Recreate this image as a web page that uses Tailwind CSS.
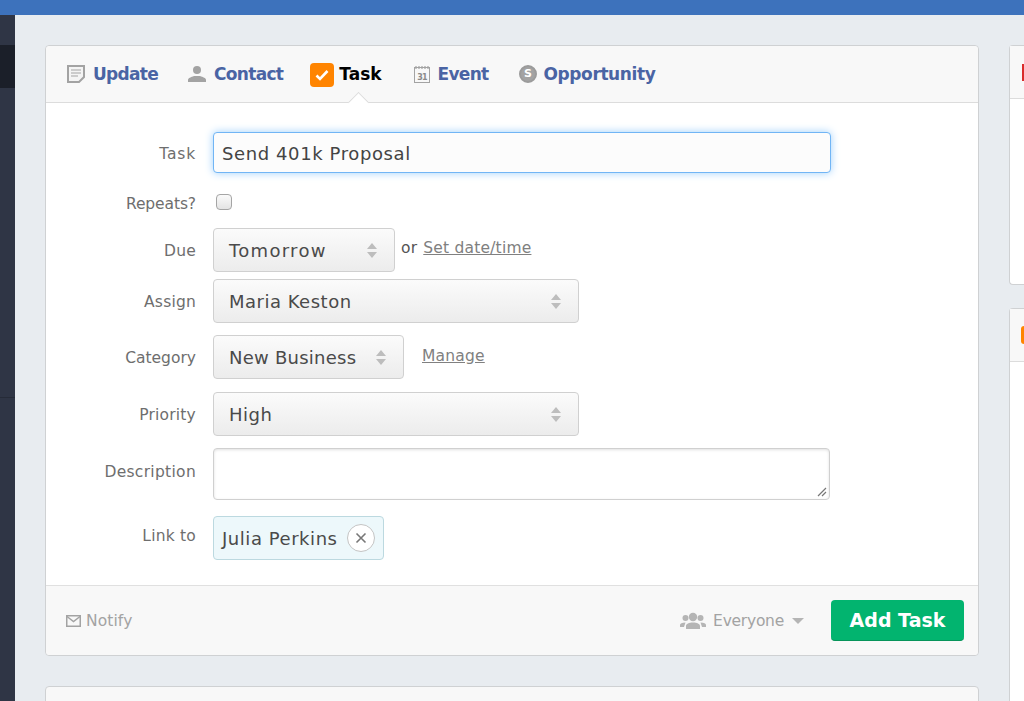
<!DOCTYPE html>
<html lang="en">
<head>
  <meta charset="UTF-8">
  <title>Add Task</title>
  <script src="https://cdn.jsdelivr.net/npm/@tailwindcss/browser@4"></script>
</head>
<body class="h-[701px] overflow-hidden bg-[#e8ecf0] font-['DejaVu_Sans',sans-serif]">

  <!-- Top bar -->
  <div class="h-[15px] bg-[#3d72bc]"></div>

  <div class="flex h-[686px]">
    <!-- Sidebar -->
    <div class="w-[15px] shrink-0 bg-[#2f3545]">
      <div class="mt-[30px] h-[43px] bg-[#1b1f29]"></div>
      <div class="mt-[309px] h-px bg-[#262b38]"></div>
    </div>

    <!-- Main column -->
    <div class="w-[964px] shrink-0 pl-[30px] pt-[30px]">
      <div class="h-[611px] rounded-[4px] border border-[#cfd1d3] bg-white">

        <!-- Tabs -->
        <div class="relative flex h-[57px] items-center rounded-t-[4px] border-b border-[#dcdcdc] bg-[#f8f8f8] pl-[21px] text-[17px] font-bold tracking-[-0.7px] text-[#4a64a4]">
          <div class="flex items-center gap-[8px]">
            <svg class="h-[18px] w-[18px]" viewBox="0 0 18 18"><path d="M1 1h16v11l-5 5H1z" fill="#f4f4f4" stroke="#a3a3a3" stroke-width="2"/><path d="M4 5h10M4 8h10M4 11h7" stroke="#a3a3a3" stroke-width="1.2"/></svg>
            <span class="pt-[2px]">Update</span>
          </div>
          <div class="ml-[30px] flex items-center gap-[8px]">
            <svg class="h-[18px] w-[18px]" viewBox="0 0 18 18"><circle cx="9" cy="5" r="4" fill="#a3a3a3"/><path d="M0 17v-2c0-2 3-3 6-4h6c3 1 6 2 6 4v2z" fill="#a3a3a3"/></svg>
            <span class="pt-[2px]">Contact</span>
          </div>
          <div class="ml-[27px] flex items-center gap-[5px] tracking-[0px] text-black">
            <span class="mt-[2px] flex h-[24px] w-[24px] items-center justify-center rounded-[4px] bg-[#ff8400]">
              <svg class="h-[14px] w-[14px]" viewBox="0 0 14 14"><path d="M1.5 7.5l3.500 3.500 7.500-8" fill="none" stroke="#fff" stroke-width="2.600"/></svg>
            </span>
            <span class="pt-[2px]">Task</span>
          </div>
          <div class="ml-[32px] flex items-center gap-[8px]">
            <svg class="h-[18px] w-[16px]" viewBox="0 0 16 18"><rect x="0.5" y="2.5" width="15" height="15" fill="#f8f8f8" stroke="#a3a3a3"/><path d="M2 1v3M5 1v3M8 1v3M11 1v3M14 1v3" stroke="#a3a3a3" stroke-width="1.2"/><text x="8" y="14.5" text-anchor="middle" font-size="8" fill="#8a8a8a">31</text></svg>
            <span class="pt-[2px]">Event</span>
          </div>
          <div class="ml-[30px] flex items-center gap-[7px]">
            <span class="flex h-[18px] w-[18px] items-center justify-center rounded-full border-2 border-[#9b9b9b] bg-[#a3a3a3] text-[11px] font-bold text-white">S</span>
            <span class="pt-[2px] tracking-[-0.4px]">Opportunity</span>
          </div>
          <!-- Active tab notch -->
          <div class="absolute bottom-[-8px] left-[304.500px] h-[15px] w-[15px] rotate-45 border-l border-t border-[#dcdcdc] bg-white"></div>
        </div>

        <!-- Form -->
        <div class="h-[482px] pt-[29px] text-[15.5px] tracking-[0.2px] text-[#6e6e6e]">
          <div class="flex items-center">
            <label class="w-[150px] pt-[5px] text-right tracking-[0.8px]">Task</label>
            <div class="ml-[17px] flex h-[41px] w-[618px] items-center rounded-[4px] border border-[#71b5f5] bg-[#fcfcfc] pl-[8px] pt-[2px] text-[18px] tracking-[0.6px] text-[#444] shadow-[0_0_8px_#9fd0fb]">Send 401k Proposal</div>
          </div>

          <div class="mt-[20px] flex h-[18px] items-center">
            <label class="w-[150px] pt-[5px] text-right tracking-[-0.1px]">Repeats?</label>
            <div class="ml-[20px] h-[16px] w-[16px] rounded-[4px] border border-[#a5a5a5] bg-gradient-to-b from-[#fafafa] to-[#e4e4e4]"></div>
          </div>

          <div class="mt-[17px] flex items-center">
            <label class="w-[150px] pt-[4px] text-right">Due</label>
            <div class="ml-[17px] flex h-[44px] w-[182px] items-center justify-between rounded-[4px] border border-[#d0d0d0] bg-gradient-to-b from-[#fbfbfb] to-[#ececec] pl-[15px] pr-[16px] text-[18px] tracking-[1.3px] text-[#4a4a4a]">
              <span class="pt-[1px]">Tomorrow</span>
              <svg class="h-[15px] w-[12px]" viewBox="0 0 12 15"><path d="M6 0l5 6H1zM6 15l5-6H1z" fill="#bdbdbd"/></svg>
            </div>
            <span class="ml-[6px] mb-[3px] text-[#555]">or</span>
            <a class="ml-[6px] mb-[3px] text-[#808080] underline">Set date/time</a>
          </div>

          <div class="mt-[7px] flex items-center">
            <label class="w-[150px] pt-[4px] text-right">Assign</label>
            <div class="ml-[17px] flex h-[44px] w-[366px] items-center justify-between rounded-[4px] border border-[#d0d0d0] bg-gradient-to-b from-[#fbfbfb] to-[#ececec] pl-[15px] pr-[16px] text-[18px] tracking-[0.5px] text-[#4a4a4a]">
              <span class="pt-[1px]">Maria Keston</span>
              <svg class="h-[15px] w-[12px]" viewBox="0 0 12 15"><path d="M6 0l5 6H1zM6 15l5-6H1z" fill="#bdbdbd"/></svg>
            </div>
          </div>

          <div class="mt-[12px] flex items-center">
            <label class="w-[150px] pt-[4px] text-right tracking-[0px]">Category</label>
            <div class="ml-[17px] flex h-[44px] w-[191px] items-center justify-between rounded-[4px] border border-[#d0d0d0] bg-gradient-to-b from-[#fbfbfb] to-[#ececec] pl-[15px] pr-[16px] text-[18px] tracking-[0.25px] text-[#4a4a4a]">
              <span class="pt-[1px]">New Business</span>
              <svg class="h-[15px] w-[12px]" viewBox="0 0 12 15"><path d="M6 0l5 6H1zM6 15l5-6H1z" fill="#bdbdbd"/></svg>
            </div>
            <a class="ml-[18px] mt-[-1px] text-[#808080] underline">Manage</a>
          </div>

          <div class="mt-[13px] flex items-center">
            <label class="w-[150px] pt-[4px] text-right">Priority</label>
            <div class="ml-[17px] flex h-[44px] w-[366px] items-center justify-between rounded-[4px] border border-[#d0d0d0] bg-gradient-to-b from-[#fbfbfb] to-[#ececec] pl-[15px] pr-[16px] text-[18px] tracking-[0.5px] text-[#4a4a4a]">
              <span class="pt-[1px]">High</span>
              <svg class="h-[15px] w-[12px]" viewBox="0 0 12 15"><path d="M6 0l5 6H1zM6 15l5-6H1z" fill="#bdbdbd"/></svg>
            </div>
          </div>

          <div class="mt-[12px] flex items-start">
            <label class="w-[150px] pt-[13px] text-right tracking-[0.3px]">Description</label>
            <div class="relative ml-[17px] h-[52px] w-[617px] rounded-[4px] border border-[#d0d0d0] bg-white shadow-[inset_0_1px_3px_#e0e0e0]">
              <svg class="absolute bottom-[2px] right-[2px] h-[10px] w-[10px]" viewBox="0 0 10 10"><path d="M1 9l8-8M5 9l4-4" stroke="#777" stroke-width="1.2"/></svg>
            </div>
          </div>

          <div class="mt-[16px] flex items-start">
            <label class="w-[150px] pt-[9px] text-right">Link to</label>
            <div class="ml-[17px] flex h-[44px] items-center rounded-[4px] border border-[#bcd9e0] bg-[#edf8fb] pl-[8px] pr-[8px] text-[18px] tracking-[0.55px] text-[#4a4a4a]">
              <span class="pt-[1px]">Julia Perkins</span>
              <span class="ml-[9px] flex h-[28px] w-[28px] items-center justify-center rounded-full border border-[#c4c4c4] bg-white">
                <svg class="h-[12px] w-[12px]" viewBox="0 0 12 12"><path d="M1.5 1.5l9 9M10.500 1.500l-9 9" stroke="#777" stroke-width="1.6"/></svg>
              </span>
            </div>
          </div>
        </div>

        <!-- Footer -->
        <div class="flex h-[70px] items-center justify-between rounded-b-[4px] border-t border-[#e0e0e0] bg-[#f8f8f8] pl-[20px] pr-[14px] text-[15.5px] tracking-[0.1px] text-[#a3a3a3]">
          <div class="flex items-center gap-[5px]">
            <svg class="h-[12px] w-[15px]" viewBox="0 0 15 12"><rect x="0.75" y="0.75" width="13.5" height="10.5" fill="none" stroke="#a3a3a3" stroke-width="1.5"/><path d="M1 1.5l6.500 5 6.500-5" fill="none" stroke="#a3a3a3" stroke-width="1.5"/></svg>
            <span class="pt-[2px]">Notify</span>
          </div>
          <div class="flex items-center">
            <svg class="h-[17px] w-[26px]" viewBox="0 0 26 17"><circle cx="13" cy="5" r="4.2" fill="#b5b5b5"/><circle cx="5.5" cy="6" r="3" fill="#b5b5b5"/><circle cx="20.5" cy="6" r="3" fill="#b5b5b5"/><path d="M6 17v-3c0-2 3-3.500 7-3.500s7 1.500 7 3.500v3zM0 15v-2c0-1.500 2-2.500 5.500-2.500L4 15zM26 15v-2c0-1.500-2-2.500-5.500-2.500L22 15z" fill="#b5b5b5"/></svg>
            <span class="ml-[7px] pt-[2px] tracking-[-0.25px]">Everyone</span>
            <span class="ml-[8px] h-0 w-0 border-x-[6px] border-t-[6px] border-x-transparent border-t-[#b5b5b5]"></span>
            <button class="ml-[27px] h-[41px] w-[133px] rounded-[4px] border-b border-[#07945a] bg-[#02b46f] text-[19px] font-bold tracking-[0px] text-white">Add Task</button>
          </div>
        </div>
      </div>

      <!-- Card below -->
      <div class="mt-[30px] h-[40px] rounded-t-[4px] border border-[#cfd1d3] bg-[#f8f8f8]"></div>
    </div>

    <!-- Right column -->
    <div class="flex-1 overflow-hidden pl-[30px] pt-[30px]">
      <div class="h-[240px] w-[60px] rounded-l-[4px] border border-r-0 border-[#cfd1d3] bg-white">
        <div class="flex h-[53px] items-center border-b border-[#dcdcdc] bg-[#f8f8f8] pl-[12px]">
          <div class="h-[17px] w-[10px] bg-[#d92b2b]"></div>
        </div>
      </div>
      <div class="mt-[23px] h-[400px] w-[60px] rounded-l-[4px] border border-r-0 border-[#cfd1d3] bg-white">
        <div class="flex h-[53px] items-center border-b border-[#dcdcdc] bg-[#f8f8f8] pl-[11px]">
          <div class="h-[18px] w-[10px] rounded-l-[3px] bg-[#ff8400]"></div>
        </div>
      </div>
    </div>
  </div>
</body>
</html>
